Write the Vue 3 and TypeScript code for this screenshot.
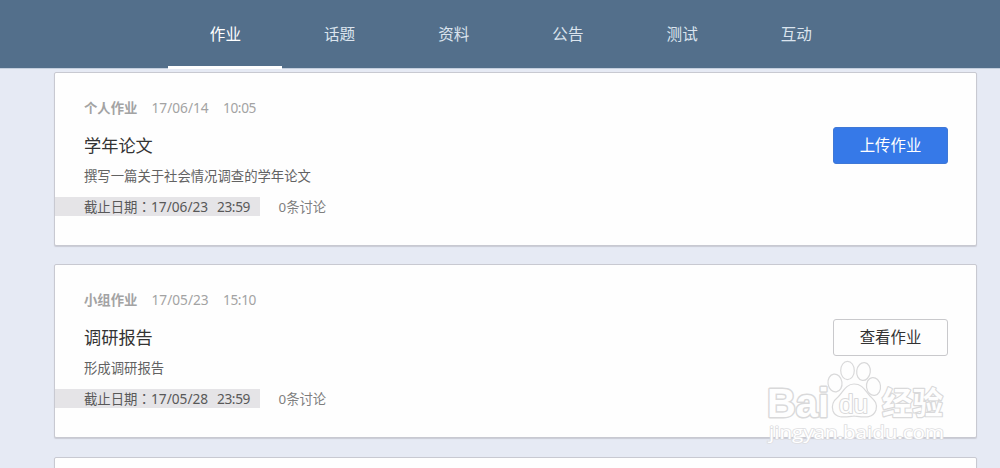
<script setup lang="ts">
interface Assignment {
  kind: string
  date: string
  time: string
  title: string
  description: string
  dueDate: string
  dueTime: string
  action: string
  primary: boolean
}

const tabs: string[] = ['作业', '话题', '资料', '公告', '测试', '互动']

const assignments: Assignment[] = [
  {
    kind: '个人作业', date: '17/06/14', time: '10:05', title: '学年论文',
    description: '撰写一篇关于社会情况调查的学年论文',
    dueDate: '17/06/23', dueTime: '23:59', action: '上传作业', primary: true,
  },
  {
    kind: '小组作业', date: '17/05/23', time: '15:10', title: '调研报告',
    description: '形成调研报告',
    dueDate: '17/05/28', dueTime: '23:59', action: '查看作业', primary: false,
  },
]
</script>

<template>
  <div class="page">
    <nav class="tabs">
      <a v-for="(tab, i) in tabs" :key="tab" class="tab" :class="{ active: i === 0 }">{{ tab }}</a>
    </nav>

    <main class="list">
      <article v-for="item in assignments" :key="item.title" class="card">
        <div class="info">
          <div class="meta">
            <b class="kind">{{ item.kind }}</b>
            <span class="date">{{ item.date }}</span>
            <span class="time">{{ item.time }}</span>
          </div>
          <h2 class="title">{{ item.title }}</h2>
          <p class="description">{{ item.description }}</p>
          <div class="footer">
            <div class="due">
              <span class="due-label">截止日期<span class="colon">：</span></span>
              <span class="due-date">{{ item.dueDate }}</span>
              <span class="due-time">{{ item.dueTime }}</span>
            </div>
            <span class="comments">0条讨论</span>
          </div>
        </div>
        <button class="action" :class="{ primary: item.primary }">{{ item.action }}</button>
      </article>
      <article class="card"></article>
    </main>

    <svg class="watermark" width="184" height="90" viewBox="0 0 184 90">
      <g class="outline">
        <text class="latin" x="1" y="56.5" textLength="62" lengthAdjust="spacingAndGlyphs">Bai</text>
        <ellipse cx="69" cy="23" rx="7" ry="9" transform="rotate(-8 69 23)" />
        <ellipse cx="81.5" cy="10.5" rx="6.8" ry="9.2" />
        <ellipse cx="97.5" cy="11.5" rx="6.8" ry="9" transform="rotate(8 97.5 11.5)" />
        <ellipse cx="107.5" cy="26.5" rx="7" ry="9" transform="rotate(-8 107.5 26.5)" />
        <path d="M88 24 C80 24 77 32 72 37 C67 41 65 45 67 51 C70 59 79 57 88 56 C98 57 107 59 110 50 C112 43 108 40 104 36 C99 31 97 24 88 24 Z" />
        <text class="du" x="73" y="52.5" textLength="29" lengthAdjust="spacingAndGlyphs">du</text>
        <text class="cjk" x="116" y="54" textLength="61" lengthAdjust="spacingAndGlyphs">经验</text>
      </g>
      <text class="url" x="3" y="78.5" textLength="175" lengthAdjust="spacingAndGlyphs">jingyan.baidu.com</text>
    </svg>
  </div>
</template>

<style>
body {
  margin: 0;
  overflow: hidden;
}
</style>

<style scoped>
.page {
  position: relative;
  box-sizing: border-box;
  width: 1000px;
  height: 468px;
  overflow: hidden;
  background: #e6eaf4;
  font-family: "Noto Sans", "Noto Sans CJK SC", sans-serif;
  font-size: 13.35px;
}

.tabs {
  box-sizing: border-box;
  display: flex;
  height: 69px;
  padding-left: 168.3px;
  background: #536f8b;
  border-bottom: 1px solid #c3cedd;
}

.tab {
  box-sizing: border-box;
  width: 114.2px;
  height: 69px;
  line-height: 69px;
  text-align: center;
  font-size: 15.6px;
  color: #dbe4ee;
}

.tab.active {
  color: #fff;
  border-bottom: 3px solid #fff;
}

.list {
  display: flex;
  flex-direction: column;
  gap: 18.4px;
  padding: 3px 23px 0 54px;
}

.card {
  box-sizing: border-box;
  display: flex;
  flex: none;
  justify-content: space-between;
  align-items: flex-start;
  height: 174px;
  background: #fefefe;
  border: 1px solid #c8c9d1;
  border-radius: 2px;
  box-shadow: 0 1px 1px #c9cbd5;
}

.info {
  display: flex;
  flex-direction: column;
}

.meta {
  display: flex;
  height: 20px;
  margin: 25px 0 0 29px;
  line-height: 20px;
  color: #a3a3a3;
}

.kind {
  width: 67.5px;
}

.date {
  width: 71.5px;
}

.date,
.due-date {
  font-size: 13.7px;
}

.time,
.due-time {
  font-size: 13.7px;
  letter-spacing: -0.4px;
}

.title {
  height: 26px;
  margin: 15px 0 0 29px;
  font-size: 17.2px;
  font-weight: 400;
  line-height: 26px;
  color: #333;
}

.description {
  height: 20px;
  margin: 7px 0 0 29px;
  line-height: 20px;
  color: #626262;
}

.footer {
  display: flex;
  height: 19px;
  margin-top: 11px;
  line-height: 20px;
}

.due {
  box-sizing: border-box;
  display: flex;
  width: 205px;
  padding-left: 29px;
  background: #e5e4e7;
  color: #585858;
}

.due-label {
  width: 67px;
}

.colon {
  font-family: "Noto Sans CJK TC", sans-serif;
  line-height: 1;
}

.due-date {
  width: 66px;
}

.comments {
  margin-left: 18.5px;
  color: #7e7e7e;
}

.action {
  box-sizing: border-box;
  width: 115px;
  height: 37px;
  margin: 54px 28px 0 0;
  padding: 0;
  border: 1px solid #c9c9cc;
  border-radius: 3px;
  background: #fefefe;
  font-family: inherit;
  font-size: 15.4px;
  line-height: 36px;
  color: #333;
}

.action.primary {
  border-color: #3f78d6;
  background: #3679e8;
  color: #fff;
}

.watermark {
  position: absolute;
  left: 766px;
  top: 360px;
}

.outline {
  fill: #fefefe;
  stroke: #d9d9da;
  stroke-width: 1.2;
  stroke-linejoin: round;
}

.latin {
  font: bold 41px "Liberation Sans", sans-serif;
  stroke-width: 3;
  paint-order: stroke;
}

.du {
  font: 25px "Liberation Sans", sans-serif;
  stroke-width: 2;
  paint-order: stroke;
}

.cjk {
  font: bold 31px "Noto Sans CJK SC", sans-serif;
  stroke-width: 2.4;
  paint-order: stroke;
}

.url {
  fill: #fff;
  stroke: #dedee1;
  stroke-width: 1.6;
  paint-order: stroke;
  font: 18px "Open Sans", sans-serif;
}
</style>
